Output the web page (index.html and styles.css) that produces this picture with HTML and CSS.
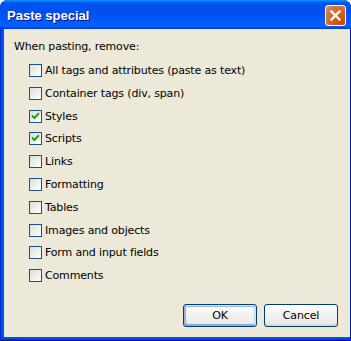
FILE: index.html
```html
<!DOCTYPE html>
<html>
<head>
<meta charset="utf-8">
<link rel="stylesheet" href="styles.css">
</head>
<body>
<div class="window">
  <div class="titlebar">
    <span class="title">Paste special</span>
    <span class="close"><svg width="13" height="13" viewBox="0 0 13 13"><path d="M2.5 2.5 L10.5 10.5 M10.5 2.5 L2.5 10.5" stroke="#fff" stroke-width="2.4" stroke-linecap="square" fill="none"/></svg></span>
  </div>
  <div class="content">
    <div class="intro">When pasting, remove:</div>
    <ul class="options">
      <li class="opt"><span class="cb"></span><span>All tags and attributes (paste as text)</span></li>
      <li class="opt"><span class="cb"></span><span>Container tags (div, span)</span></li>
      <li class="opt"><span class="cb checked"><svg width="11" height="11" viewBox="0 0 11 11"><path d="M2 4.5 L4.3 7 L9 2.3" stroke="#21A121" stroke-width="2" fill="none"/></svg></span><span>Styles</span></li>
      <li class="opt"><span class="cb checked"><svg width="11" height="11" viewBox="0 0 11 11"><path d="M2 4.5 L4.3 7 L9 2.3" stroke="#21A121" stroke-width="2" fill="none"/></svg></span><span>Scripts</span></li>
      <li class="opt"><span class="cb"></span><span>Links</span></li>
      <li class="opt"><span class="cb"></span><span>Formatting</span></li>
      <li class="opt"><span class="cb"></span><span>Tables</span></li>
      <li class="opt"><span class="cb"></span><span>Images and objects</span></li>
      <li class="opt"><span class="cb"></span><span>Form and input fields</span></li>
      <li class="opt"><span class="cb"></span><span>Comments</span></li>
    </ul>
    <div class="buttons">
      <button class="btn default">OK</button>
      <button class="btn">Cancel</button>
    </div>
  </div>
</div>
</body>
</html>
```
FILE: styles.css
```css
html, body {
  margin: 0;
  padding: 0;
  width: 351px;
  height: 341px;
  overflow: hidden;
  background: #fff;
}
.window {
  width: 351px;
  height: 341px;
  box-sizing: border-box;
  display: flex;
  flex-direction: column;
  background: #0050ee;
  border-radius: 8px 8px 0 0;
  box-shadow: inset 1px 0 #0029d0, inset 0 -1px #0019a0, inset 0 -2px #0030c8, inset -1px 0 #001ea0;
  font-family: "DejaVu Sans", sans-serif;
  font-size: 11px;
  letter-spacing: -0.15px;
  color: #000;
}
.titlebar {
  height: 29px;
  flex: none;
  box-sizing: border-box;
  display: flex;
  align-items: center;
  justify-content: space-between;
  padding: 0 5px 0 7px;
  border-radius: 8px 8px 0 0;
  background: linear-gradient(180deg, #0997ff, #0053ee 10%, #0050ee 40%, #0060ff 85%, #005bff 92%, #003dd7 97%, #003dd7);
}
.title {
  font-family: "Liberation Sans", Arial, sans-serif;
  font-weight: bold;
  font-size: 13px;
  letter-spacing: 0;
  color: #fff;
  text-shadow: 1px 1px #0f1089;
  line-height: 15px;
  margin-top: 1px;
}
.close {
  width: 21px;
  height: 21px;
  box-sizing: border-box;
  border: 1px solid #fff;
  border-radius: 3px;
  display: flex;
  align-items: center;
  justify-content: center;
  background: radial-gradient(circle at 90% 90%, #cc4600 0%, #dc6527 55%, #cd7546 70%, transparent),
              linear-gradient(135deg, #f0a585 0%, #e25a32 40%, #c8401a 100%);
  margin-top: 1px;
}
.content {
  flex: 1;
  background: #ece9d8;
  margin: 0 1px 4px 4px;
  padding: 11px 12px 0 10px;
  display: flex;
  flex-direction: column;
}
.intro {
  line-height: 13px;
}
.options {
  list-style: none;
  margin: 11px 0 0 15px;
  padding: 0;
  display: grid;
  grid-auto-rows: 13px;
  row-gap: 9.8px;
}
.opt {
  display: flex;
  align-items: center;
  gap: 3px;
  line-height: 13px;
  white-space: nowrap;
}
.cb {
  width: 13px;
  height: 13px;
  box-sizing: border-box;
  border: 1px solid #1c5180;
  background: linear-gradient(135deg, #dcdcd7, #fff);
  display: flex;
  align-items: center;
  justify-content: center;
  flex: none;
}
.buttons {
  margin-top: auto;
  margin-bottom: 10px;
  display: flex;
  justify-content: flex-end;
  gap: 7px;
}
.btn {
  width: 74px;
  height: 23px;
  box-sizing: border-box;
  border: 1px solid #003c74;
  border-radius: 3px;
  background: linear-gradient(180deg, #fff, #f3f3ef 40%, #ecebe6 86%, #d6d0c5);
  font-family: "DejaVu Sans", sans-serif;
  font-size: 11px;
  letter-spacing: -0.15px;
  color: #000;
  padding: 0;
}
.btn.default {
  box-shadow: inset -1px 1px #cee7ff, inset 1px 2px #98b8ea, inset -2px 2px #bcd4f6, inset 1px -1px #89ade4, inset 2px -2px #89ade4;
}
```
